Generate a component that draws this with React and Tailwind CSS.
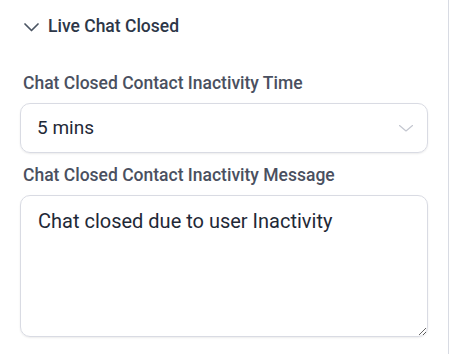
export default function App() {
  return (
    <div
      className="w-[449px] h-[354px] bg-white border-r border-[#d8dbe3] overflow-hidden"
      style={{ fontFamily: "Roboto, 'Noto Sans', sans-serif" }}
    >
      <div className="px-5 pt-[15px]">
        {/* section header */}
        <div className="flex items-center gap-[9px] pl-[4px] h-[22px]">
          <svg width="15" height="9" viewBox="0 0 15 9" fill="none" className="mt-[2px]">
            <polyline points="1,1 7.5,7.5 14,1" stroke="#4b5563" strokeWidth="1.7" strokeLinecap="round" strokeLinejoin="round" />
          </svg>
          <span className="text-[17.5px] font-medium text-[#2d3748] leading-[22px]">Live Chat Closed</span>
        </div>

        {/* inactivity time */}
        <label className="block mt-[35px] pl-[3px] text-[17.5px] font-medium text-[#4a5060] leading-[22px]">
          Chat Closed Contact Inactivity Time
        </label>
        <div className="mt-[9px] h-[50px] w-[408px] rounded-[10px] border border-[#d9dbe3] shadow-[0_1px_2px_rgba(0,0,0,0.08)] flex items-center justify-between pl-4 pr-[14px]">
          <span className="text-[19px] text-[#1f2937]">5 mins</span>
          <svg width="14" height="7" viewBox="0 0 14 7" fill="none" className="mt-[1px]">
            <polyline points="0.5,0.5 7,6 13.5,0.5" stroke="#c4c7d0" strokeWidth="1.2" strokeLinecap="round" strokeLinejoin="round" />
          </svg>
        </div>

        {/* inactivity message */}
        <label className="block mt-[11px] pl-[3px] text-[17.5px] font-medium text-[#4a5060] leading-[22px]">
          Chat Closed Contact Inactivity Message
        </label>
        <textarea
          className="mt-[9px] block w-[408px] h-[142px] rounded-[10px] border border-[#d9dbe3] shadow-[0_1px_2px_rgba(0,0,0,0.08)] px-[17px] py-[10px] text-[20px] text-[#1f2937] outline-none"
          defaultValue="Chat closed due to user Inactivity"
        />
      </div>
    </div>
  );
}
